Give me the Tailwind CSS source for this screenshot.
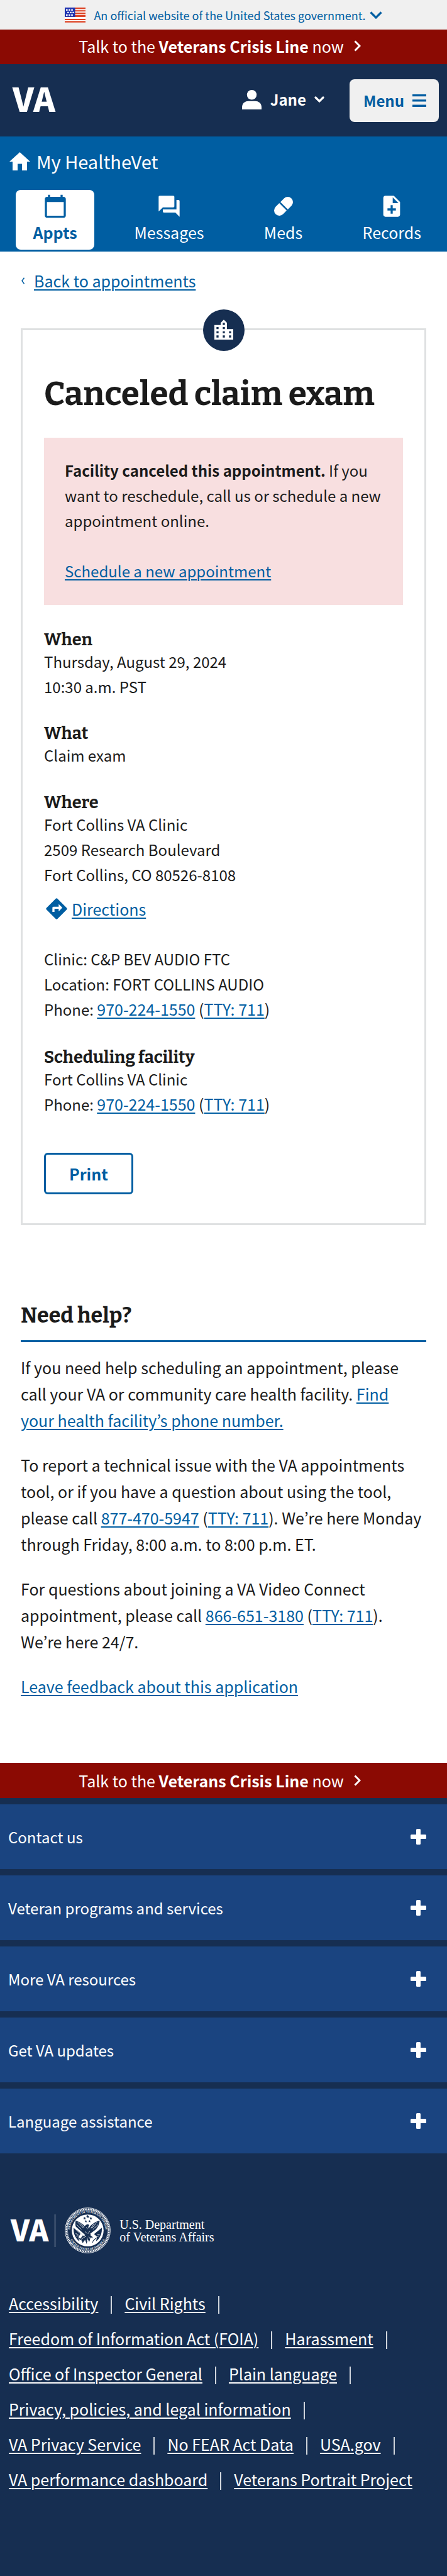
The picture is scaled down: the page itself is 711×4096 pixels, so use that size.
<!DOCTYPE html>
<html lang="en">
<head>
<meta charset="utf-8">
<meta name="viewport" content="width=device-width, initial-scale=1">
<title>Canceled claim exam | Veterans Affairs</title>
<script src="https://cdn.jsdelivr.net/npm/@tailwindcss/browser@4"></script>
</head>
<body class="bg-[#162e51] font-['Noto_Sans_CJK_JP','Open_Sans',sans-serif] text-2xl text-[#1b1b1b]">

<!-- Government banner -->
<button type="button" class="flex h-[47px] w-full items-center justify-center bg-[#f0f0f0] text-lg leading-[24px] text-[#005ea2]">
  <svg class="mr-[13px] h-6 w-[33px]" viewBox="0 0 40 29" aria-hidden="true">
    <rect width="40" height="29" fill="#fff"/>
    <path fill="#db3e1f" d="M0 0h40v3H0zM0 5h40v2.600H0zM0 9.500h40v2.600H0zM0 14h40v2.500H0zM0 17h40v1H0zM0 21.500h40v2.600H0zM0 26h40v2.600H0z"/>
    <path fill="#fff" d="M0 18h40v3.500H0z"/>
    <path fill="#1e33b1" d="M0 0h20v18H0z"/>
    <path fill="#fff" d="M2.500 3h3v3h-3zM7.500 3h3v3h-3zM12.500 3h3v3h-3zM5 8h3v3H5zM10 8h3v3h-3zM15 8h3v3h-3zM2.500 13h3v3h-3zM7.500 13h3v3h-3zM12.500 13h3v3h-3z"/>
  </svg>
  <span>An official website of the United States government.</span>
  <svg class="ml-[6px] h-3 w-5" viewBox="0 0 20 12" fill="none" stroke="currentColor" stroke-width="3.200" aria-hidden="true"><path d="M1.500 1.500 10 10l8.500-8.500"/></svg>
</button>

<!-- Crisis line -->
<button type="button" class="flex h-[55px] w-full items-center justify-center bg-[#8b0a03] pr-3 pb-[3px] text-[25px] leading-[40px] text-white">
  <span>Talk to the <strong class="font-bold">Veterans Crisis Line</strong> now</span>
  <svg class="ml-4 h-[18px] w-[11px]" viewBox="0 0 11 18" fill="none" stroke="currentColor" stroke-width="3" aria-hidden="true"><path d="M1.500 1.500 9 9l-7.500 7.500"/></svg>
</button>

<!-- Site header -->
<header class="flex h-[115px] items-center justify-between bg-[#162e51] pr-[13px] pl-5 text-white">
  <a href="#" class="pb-2 text-[53px] leading-none font-black" aria-label="VA home">VA</a>
  <div class="flex items-center gap-10">
    <button type="button" class="flex items-center pb-[3px] leading-[40px] font-bold">
      <svg class="mr-[14px] h-[31px] w-[31px]" viewBox="0 0 31 31" fill="currentColor" aria-hidden="true"><circle cx="15.500" cy="7.700" r="7.700"/><path d="M0 31v-3.500C0 21 5 17.700 10 17.700h11c5 0 10 3.300 10 9.800V31z"/></svg>
      Jane
      <svg class="ml-[13px] h-[11px] w-4" viewBox="0 0 16 11" fill="none" stroke="currentColor" stroke-width="3.200" stroke-linecap="round" aria-hidden="true"><path d="M2 2l6 6 6-6"/></svg>
    </button>
    <button type="button" class="flex h-[68px] items-center rounded-lg bg-[#f0f0f0] pr-5 pl-[22px] leading-[40px] font-bold text-[#005ea2]">
      Menu
      <svg class="ml-[13px] h-5 w-[22px]" viewBox="0 0 22 20" fill="currentColor" aria-hidden="true"><path d="M0 0h22v3.300H0zM0 8.300h22v3.300H0zM0 16.600h22v3.300H0z"/></svg>
    </button>
  </div>
</header>

<!-- My HealtheVet navigation -->
<nav class="bg-[#005ea2] pt-[19px] pb-[3px] text-white" aria-label="My HealtheVet">
  <a href="#" class="flex h-10 items-center pl-[15px] text-[29px] leading-[40px]">
    <svg class="mr-[10px] h-[29px] w-[33px]" viewBox="0 0 33 29" fill="currentColor" aria-hidden="true"><path d="M16.500 0 33 15h-5v14h-8V18.500h-7V29H5V15H0z"/></svg>
    My HealtheVet
  </a>
  <ul class="mt-[26px] flex justify-between pr-[14px] pl-[25px] text-[25px] leading-[30px]">
    <li><a href="#" aria-current="page" class="flex h-[95px] min-w-[125px] flex-col items-center gap-[6px] rounded-lg bg-white px-[27px] pt-[6px] font-bold text-[#005ea2]">
      <svg class="size-10" viewBox="0 0 24 24" fill="currentColor" aria-hidden="true"><path d="M20 3h-1V1h-2v2H7V1H5v2H4c-1.100 0-2 .9-2 2v16c0 1.100.9 2 2 2h16c1.100 0 2-.9 2-2V5c0-1.100-.9-2-2-2zm0 18H4V8h16v13z"/></svg>
      Appts</a></li>
    <li><a href="#" class="flex h-[95px] min-w-[125px] flex-col items-center gap-[6px] px-[27px] pt-[6px]">
      <svg class="size-10" viewBox="0 0 24 24" fill="currentColor" aria-hidden="true"><path d="M21 6h-2v9H6v2c0 .55.45 1 1 1h11l4 4V7c0-.55-.45-1-1-1zm-4 6V3c0-.55-.45-1-1-1H3c-.55 0-1 .45-1 1v14l4-4h10c.55 0 1-.45 1-1z"/></svg>
      Messages</a></li>
    <li><a href="#" class="flex h-[95px] min-w-[125px] flex-col items-center gap-[6px] px-[27px] pt-[6px]">
      <svg class="size-10" viewBox="0 0 24 24" fill="currentColor" aria-hidden="true"><g transform="rotate(-45 12 12)"><path d="M11.200 7H6.350a5 5 0 0 0 0 10h4.850zM12.800 7h4.850a5 5 0 0 1 0 10H12.800z"/></g></svg>
      Meds</a></li>
    <li><a href="#" class="flex h-[95px] min-w-[125px] flex-col items-center gap-[6px] px-[27px] pt-[6px]">
      <svg class="size-10" viewBox="0 0 24 24" fill="currentColor" aria-hidden="true"><path d="M14 2H6c-1.100 0-1.990.9-1.990 2L4 20c0 1.100.89 2 1.990 2H18c1.100 0 2-.9 2-2V8l-6-6zm2 14h-3v3h-2v-3H8v-2h3v-3h2v3h3v2zm-3-7V3.500L18.500 9H13z"/></svg>
      Records</a></li>
  </ul>
</nav>

<main class="bg-white px-[33px] pt-[26px] pb-[101px] leading-[40px]">
  <a href="#" class="flex items-center text-[25px] text-[#005ea2]">
    <svg class="mr-[14px] h-[11px] w-[7px]" viewBox="0 0 7 11" fill="none" stroke="currentColor" stroke-width="1.500" aria-hidden="true"><path d="M5.500.8 2 5.500l3.500 4.700"/></svg>
    <span class="underline decoration-2 underline-offset-[3px]">Back to appointments</span>
  </a>

  <article class="relative mt-14 border-[3px] border-[#dfe1e2] px-[34px] pt-[69px] pb-[46px]">
    <span class="absolute -top-[33px] left-1/2 flex size-[66px] -translate-x-1/2 items-center justify-center rounded-full bg-[#162e51] text-white">
      <svg class="size-10" viewBox="0 0 24 24" fill="currentColor" aria-hidden="true"><path d="M15 11V5l-3-3-3 3v2H3v14h18V11h-6zm-8 8H5v-2h2v2zm0-4H5v-2h2v2zm0-4H5V9h2v2zm6 8h-2v-2h2v2zm0-4h-2v-2h2v2zm0-4h-2V9h2v2zm0-4h-2V5h2v2zm6 12h-2v-2h2v2zm0-4h-2v-2h2v2z"/></svg>
    </span>
    <h1 class="font-['Bitter','DejaVu_Serif',serif] text-[53px] leading-[64px] font-bold">Canceled claim exam</h1>

    <div class="mt-[38px] bg-[#f8dfe0] px-[33px] pt-8 pb-[34px]">
      <p><strong class="font-bold">Facility canceled this appointment.</strong> If you want to reschedule, call us or schedule a new appointment online.</p>
      <p class="mt-10"><a href="#" class="text-[#005ea2] underline decoration-2 underline-offset-[3px]">Schedule a new appointment</a></p>
    </div>

    <section class="mt-[41px]">
      <h2 class="font-['Bitter','DejaVu_Serif',serif] text-[27px] leading-[29px] font-bold">When</h2>
      <p>Thursday, August 29, 2024<br>10:30 a.m. PST</p>
    </section>
    <section class="mt-10">
      <h2 class="font-['Bitter','DejaVu_Serif',serif] text-[27px] leading-[29px] font-bold">What</h2>
      <p>Claim exam</p>
    </section>
    <section class="mt-[41px]">
      <h2 class="font-['Bitter','DejaVu_Serif',serif] text-[27px] leading-[29px] font-bold">Where</h2>
      <p>Fort Collins VA Clinic<br>2509 Research Boulevard<br>Fort Collins, CO 80526-8108</p>
      <a href="#" class="mt-[14px] flex items-center gap-1 text-[25px] text-[#005ea2]">
        <svg class="size-10" viewBox="0 0 24 24" fill="currentColor" aria-hidden="true"><path d="M21.710 11.290l-9-9a.996.996 0 0 0-1.410 0l-9 9c-.39.39-.39 1.020 0 1.410l9 9c.39.39 1.020.39 1.410 0l9-9c.39-.38.39-1.010 0-1.410zM14 14.500V12h-4v3H8v-4c0-.55.45-1 1-1h5V7.500l3.500 3.500-3.500 3.500z"/></svg>
        <span class="underline decoration-2 underline-offset-[3px]">Directions</span>
      </a>
      <p class="mt-10">Clinic: C&amp;P BEV AUDIO FTC<br>Location: FORT COLLINS AUDIO<br>Phone: <span class="text-[25px] leading-none"><a href="tel:9702241550" class="text-[#005ea2] underline decoration-2 underline-offset-[3px]">970-224-1550</a> (<a href="tel:711" class="text-[#005ea2] underline decoration-2 underline-offset-[3px]">TTY: 711</a>)</span></p>
    </section>
    <section class="mt-[42px]">
      <h2 class="font-['Bitter','DejaVu_Serif',serif] text-[27px] leading-[29px] font-bold">Scheduling facility</h2>
      <p>Fort Collins VA Clinic<br>Phone: <span class="text-[25px] leading-none"><a href="tel:9702241550" class="text-[#005ea2] underline decoration-2 underline-offset-[3px]">970-224-1550</a> (<a href="tel:711" class="text-[#005ea2] underline decoration-2 underline-offset-[3px]">TTY: 711</a>)</span></p>
    </section>
    <button type="button" class="mt-[57px] flex h-[66px] items-center rounded-[6px] border-[3px] border-[#005ea2] bg-white px-[37px] text-[25px] font-bold text-[#005ea2]">Print</button>
  </article>

  <section class="mt-[122px] text-[25px] leading-[42px]">
    <h2 class="border-b-[3px] border-[#005ea2] pb-[17px] font-['Bitter','DejaVu_Serif',serif] text-[34px] leading-[44px] font-bold">Need help?</h2>
    <div class="mt-[19px] flex flex-col gap-[29px]">
      <p class="pr-2">If you need help scheduling an appointment, please call your VA or community care health facility. <a href="#" class="text-[#005ea2] underline decoration-2 underline-offset-[3px]">Find your health facility’s phone number.</a></p>
      <p>To report a technical issue with the VA appointments tool, or if you have a question about using the tool, please call <a href="tel:8774705947" class="text-[#005ea2] underline decoration-2 underline-offset-[3px]">877-470-5947</a> (<a href="tel:711" class="text-[#005ea2] underline decoration-2 underline-offset-[3px]">TTY: 711</a>). We’re here Monday through Friday, 8:00 a.m. to 8:00 p.m. ET.</p>
      <p>For questions about joining a VA Video Connect appointment, please call <a href="tel:8666513180" class="text-[#005ea2] underline decoration-2 underline-offset-[3px]">866-651-3180</a> (<a href="tel:711" class="text-[#005ea2] underline decoration-2 underline-offset-[3px]">TTY: 711</a>). We’re here 24/7.</p>
      <p><a href="#" class="text-[#005ea2] underline decoration-2 underline-offset-[3px]">Leave feedback about this application</a></p>
    </div>
  </section>
</main>

<footer class="bg-[#162e51] pb-[127px] text-white">
  <button type="button" class="flex h-14 w-full items-center justify-center bg-[#8b0a03] pr-3 text-[25px] leading-[40px]">
    <span>Talk to the <strong class="font-bold">Veterans Crisis Line</strong> now</span>
    <svg class="ml-4 h-[18px] w-[11px]" viewBox="0 0 11 18" fill="none" stroke="currentColor" stroke-width="3" aria-hidden="true"><path d="M1.500 1.500 9 9l-7.500 7.500"/></svg>
  </button>

  <ul class="mt-[10px] flex flex-col gap-[10px] leading-[40px]">
    <li><button type="button" class="flex h-[103px] w-full items-center justify-between bg-[#1a4480] pr-[33px] pl-[13px]">Contact us
      <svg class="size-[25px]" viewBox="0 0 25 25" fill="currentColor" aria-hidden="true"><rect x="9" width="7" height="25" rx="1.500"/><rect y="9" width="25" height="7" rx="1.500"/></svg></button></li>
    <li><button type="button" class="flex h-[103px] w-full items-center justify-between bg-[#1a4480] pr-[33px] pl-[13px]">Veteran programs and services
      <svg class="size-[25px]" viewBox="0 0 25 25" fill="currentColor" aria-hidden="true"><rect x="9" width="7" height="25" rx="1.500"/><rect y="9" width="25" height="7" rx="1.500"/></svg></button></li>
    <li><button type="button" class="flex h-[103px] w-full items-center justify-between bg-[#1a4480] pr-[33px] pl-[13px]">More VA resources
      <svg class="size-[25px]" viewBox="0 0 25 25" fill="currentColor" aria-hidden="true"><rect x="9" width="7" height="25" rx="1.500"/><rect y="9" width="25" height="7" rx="1.500"/></svg></button></li>
    <li><button type="button" class="flex h-[103px] w-full items-center justify-between bg-[#1a4480] pr-[33px] pl-[13px]">Get VA updates
      <svg class="size-[25px]" viewBox="0 0 25 25" fill="currentColor" aria-hidden="true"><rect x="9" width="7" height="25" rx="1.500"/><rect y="9" width="25" height="7" rx="1.500"/></svg></button></li>
    <li><button type="button" class="flex h-[103px] w-full items-center justify-between bg-[#1a4480] pr-[33px] pl-[13px]">Language assistance
      <svg class="size-[25px]" viewBox="0 0 25 25" fill="currentColor" aria-hidden="true"><rect x="9" width="7" height="25" rx="1.500"/><rect y="9" width="25" height="7" rx="1.500"/></svg></button></li>
  </ul>

  <a href="#" class="mt-[86px] flex h-[73px] items-center pl-[17px]">
    <span class="pb-[7px] text-[47px] leading-none font-black">VA</span>
    <span class="ml-[10px] h-[52px] w-px bg-white/80"></span>
    <svg class="ml-[15px] size-[73px]" viewBox="0 0 88 88" aria-hidden="true">
      <defs>
        <path id="arc-top" d="M11.500 54A34 34 0 1 1 76.500 54"/>
        <path id="arc-bottom" d="M8.500 56A37.500 37.500 0 0 0 79.500 56"/>
      </defs>
      <circle cx="44" cy="44" r="43.300" fill="none" stroke="#fff" stroke-width="1"/>
      <circle cx="44" cy="44" r="40.700" fill="none" stroke="#fff" stroke-width="3" stroke-dasharray="2.200 1"/>
      <circle cx="44" cy="44" r="38.600" fill="none" stroke="#fff" stroke-width=".6"/>
      <g fill="#fff" font-family="Liberation Serif, serif" font-weight="700" font-size="5.500">
        <text><textPath href="#arc-top" startOffset="50%" text-anchor="middle">DEPARTMENT OF VETERANS AFFAIRS</textPath></text>
        <text><textPath href="#arc-bottom" startOffset="50%" text-anchor="middle">UNITED STATES OF AMERICA</textPath></text>
      </g>
      <circle cx="44" cy="44" r="30.500" fill="#fff"/>
      <g fill="#162e51">
        <path d="M44 14l1 2.200 2.400.2-1.800 1.600.5 2.300-2.100-1.200-2.100 1.200.5-2.300-1.800-1.600 2.400-.2zM38 18l.8 1.800 2 .2-1.500 1.300.4 2-1.700-1-1.700 1 .4-2-1.500-1.300 2-.2zM50 18l.8 1.800 2 .2-1.500 1.300.4 2-1.700-1-1.700 1 .4-2-1.500-1.300 2-.2zM40.500 24l.7 1.600 1.800.2-1.400 1.200.4 1.700-1.500-.9-1.500.9.4-1.700-1.400-1.200 1.800-.2zM47.500 24l.7 1.600 1.800.2-1.400 1.200.4 1.700-1.500-.9-1.500.9.4-1.700-1.400-1.200 1.800-.2z"/>
        <path d="M21 25c5 2 13 5 17 11l3-3 4-1 2 3-2 2 1 4c2-7 11-13 21-16-1 9-5 16-11 20l-7 5 6 10-5-3-3 9-3-5-2 9-3-8-5 6-1-6-5 1 7-10-7-5c-6-5-9-13-7-23z"/>
        <path d="M17 39l13 12-4 6 2 8c-7-5-12-15-11-26zM71 39L56 51l6 5-2 9c7-5 12-15 11-26z"/>
      </g>
      <path d="M18 36l20 18M69 38L50 54" stroke="#fff" stroke-width="3.200"/>
      <path d="M25 28l10 11M30 29l7 10M23 33l9 9M62 28l-10 12M56 31l-6 9M64 33l-10 9M41 38l3 3M39 46l4 4M48 45l-3 5M36 58l5-3M46 56l4 6M43 58v6M21 50l5 2M22 55l4-1M62 51l5 1M62 56l4-2M30 62l6-4M52 58l7 4" stroke="#fff" stroke-width="1" fill="none"/>
      <path d="M25 58c5 2 8 5 10 9M63 58c-5 2-8 5-10 9" stroke="#162e51" stroke-width="2" stroke-dasharray="2 1" fill="none"/>
    </svg>
    <span class="ml-[14px] font-['Liberation_Serif',serif] text-xl leading-[20px]">U.S. Department<br>of Veterans Affairs</span>
  </a>

  <ul class="mt-[51px] -mb-px flex flex-wrap px-[14px] text-[25px] leading-[56px] [&>li]:flex [&>li]:items-center [&>li]:after:mx-5 [&>li]:after:mt-[6px] [&>li]:after:h-7 [&>li]:after:w-[2px] [&>li]:after:bg-white/80 [&>li:last-child]:after:hidden">
    <li class="after:content-['']"><a href="#" class="underline decoration-2 underline-offset-[3px]">Accessibility</a></li>
    <li class="after:content-['']"><a href="#" class="underline decoration-2 underline-offset-[3px]">Civil Rights</a></li>
    <li class="after:content-['']"><a href="#" class="underline decoration-2 underline-offset-[3px]">Freedom of Information Act (FOIA)</a></li>
    <li class="after:content-['']"><a href="#" class="underline decoration-2 underline-offset-[3px]">Harassment</a></li>
    <li class="after:content-['']"><a href="#" class="underline decoration-2 underline-offset-[3px]">Office of Inspector General</a></li>
    <li class="after:content-['']"><a href="#" class="underline decoration-2 underline-offset-[3px]">Plain language</a></li>
    <li class="after:content-['']"><a href="#" class="underline decoration-2 underline-offset-[3px]">Privacy, policies, and legal information</a></li>
    <li class="after:content-['']"><a href="#" class="underline decoration-2 underline-offset-[3px]">VA Privacy Service</a></li>
    <li class="after:content-['']"><a href="#" class="underline decoration-2 underline-offset-[3px]">No FEAR Act Data</a></li>
    <li class="after:content-['']"><a href="#" class="underline decoration-2 underline-offset-[3px]">USA.gov</a></li>
    <li class="after:content-['']"><a href="#" class="underline decoration-2 underline-offset-[3px]">VA performance dashboard</a></li>
    <li class="after:content-['']"><a href="#" class="underline decoration-2 underline-offset-[3px]">Veterans Portrait Project</a></li>
  </ul>
</footer>
</body>
</html>
